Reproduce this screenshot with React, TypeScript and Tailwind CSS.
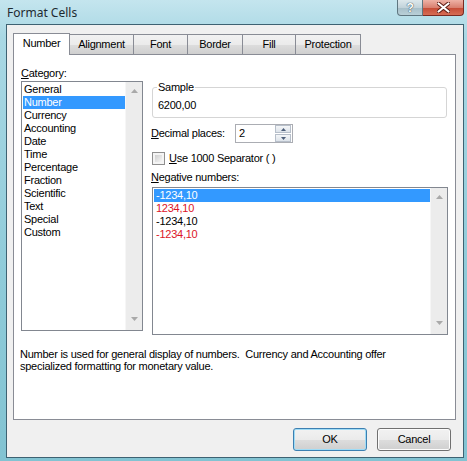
import React from 'react';

const categories = ['General', 'Number', 'Currency', 'Accounting', 'Date', 'Time', 'Percentage', 'Fraction', 'Scientific', 'Text', 'Special', 'Custom'];

const negatives = [
  { label: '-1234,10', red: false },
  { label: '1234,10', red: true },
  { label: '-1234,10', red: false },
  { label: '-1234,10', red: true },
];

const tabs = [
  { label: 'Alignment', w: 'w-[65px]' },
  { label: 'Font', w: 'w-[55px]' },
  { label: 'Border', w: 'w-[56px]' },
  { label: 'Fill', w: 'w-[54px]' },
  { label: 'Protection', w: 'w-[66px]' },
];

function Arrow({ down }: { down?: boolean }) {
  return (
    <svg width="7" height="4" viewBox="0 0 7 4">
      <path d={down ? 'M0 0 L7 0 L3.5 4 Z' : 'M0 4 L3.5 0 L7 4 Z'} fill="#a9a9a9" />
    </svg>
  );
}

function ScrollTrack() {
  return (
    <div className="w-[17px] shrink-0 bg-[#ececec] border-l border-[#f6f6f6] flex flex-col justify-between items-center pt-[7px] pb-[9px]">
      <Arrow />
      <Arrow down />
    </div>
  );
}

function TitleBar() {
  return (
    <div className="h-[24px] shrink-0 flex items-start relative">
      <span className="pl-[7px] pt-[5px] text-[12px] leading-[15px] tracking-normal text-[#1e2a30] font-['Noto_Sans',sans-serif]">Format Cells</span>
      <div className="ml-auto mr-[3px] flex">
        <div className="w-[26px] h-[16px] rounded-bl-[4px] border border-t-0 border-[#5f7680] bg-[linear-gradient(180deg,#dde8ec_0%,#c2d3da_50%,#a6bec8_51%,#b9d0d8_100%)] flex items-center justify-center">
          <span className="text-[12px] leading-[12px] font-bold text-white [text-shadow:0_0_1px_#2d4450,0_0_1px_#2d4450]">?</span>
        </div>
        <div className="w-[41px] h-[16px] rounded-br-[4px] border border-l-0 border-t-0 border-[#7a2a22] bg-[linear-gradient(180deg,#eeb2a6_0%,#d98171_50%,#c54a35_51%,#d66d55_100%)] flex items-center justify-center">
          <svg width="13" height="11" viewBox="0 0 13 11">
            <path d="M1.5 1.5 L11.5 9.5 M11.5 1.5 L1.5 9.5" stroke="#5a1a12" strokeWidth="4" strokeLinecap="round" />
            <path d="M1.5 1.5 L11.5 9.5 M11.5 1.5 L1.5 9.5" stroke="#ffffff" strokeWidth="2.2" strokeLinecap="round" />
          </svg>
        </div>
      </div>
    </div>
  );
}

export default function App() {
  return (
    <div className="w-[467px] h-[461px] flex flex-col overflow-hidden bg-[linear-gradient(180deg,#c4e5ee_0%,#a9d8e4_8%,#8fcbd9_60%,#82c3d2_100%)] font-['Liberation_Sans',Arial,sans-serif] text-[11px] tracking-[-0.25px] text-black">
      <TitleBar />

      <div className="flex-1 ml-[6px] mr-[3px] mb-[3px] border border-[#3e6272] bg-[#f0f0f0] flex flex-col pt-[8px] px-[6px]">
        {/* tab strip */}
        <div className="flex items-end h-[22px] shrink-0">
          <div className="relative z-10 w-[57px] h-[22px] bg-white border border-b-0 border-[#898c95] flex items-center justify-center pb-[2px]">
            Number
          </div>
          {tabs.map(t => (
            <div key={t.label} className={`${t.w} -ml-px h-[20px] mb-[1px] bg-[linear-gradient(180deg,#f2f2f2_0%,#ebebeb_50%,#dddddd_51%,#cfcfcf_100%)] border border-b-0 border-[#898c95] flex items-center justify-center`}>
              {t.label}
            </div>
          ))}
        </div>

        {/* panel */}
        <div className="-mt-px h-[366px] w-[443px] bg-white border border-[#898c95] flex flex-col shrink-0">
          <div className="flex items-start pl-[7px] pt-[10px]">
            {/* category */}
            <div className="w-[122px] flex flex-col">
              <div className="h-[16px] leading-[16px]"><span className="underline">C</span>ategory:</div>
              <div className="h-[250px] border border-[#828790] flex">
                <div className="flex-1 pt-[1px] pl-[1px]">
                  {categories.map(c => (
                    <div key={c} className={`h-[13px] leading-[13px] pl-[1px] ${c === 'Number' ? 'bg-[#3399ff] text-white' : ''}`}>{c}</div>
                  ))}
                </div>
                <ScrollTrack />
              </div>
            </div>

            {/* right column */}
            <div className="ml-[8px] w-[296px] flex flex-col">
              <div className="mt-[22px] ml-[1px] w-[295px] h-[31px] relative border border-[#d5d5d5] rounded-[3px] pl-[5px] pt-[11px] leading-[13px]">
                <span className="absolute -top-[8px] left-[4px] bg-white px-[1px] leading-[15px]">Sample</span>
                6200,00
              </div>

              <div className="mt-[6px] flex items-center h-[19px]">
                <span className="w-[84px]"><span className="underline">D</span>ecimal places:</span>
                <div className="w-[58px] h-[19px] border border-[#abadb3] flex items-center">
                  <span className="flex-1 pl-[3px] leading-[13px]">2</span>
                  <div className="w-[16px] h-[17px] flex flex-col mr-[1px]">
                    <div className="h-[8px] border border-[#b7bfca] bg-[linear-gradient(180deg,#f4f6f8,#dde3ea)] flex items-center justify-center">
                      <svg width="5" height="3" viewBox="0 0 5 3"><path d="M0 3 L2.5 0 L5 3 Z" fill="#4e5f7a" /></svg>
                    </div>
                    <div className="h-[8px] mt-[1px] border border-[#b7bfca] bg-[linear-gradient(180deg,#f4f6f8,#dde3ea)] flex items-center justify-center">
                      <svg width="5" height="3" viewBox="0 0 5 3"><path d="M0 0 L5 0 L2.5 3 Z" fill="#4e5f7a" /></svg>
                    </div>
                  </div>
                </div>
              </div>

              <div className="mt-[9px] ml-[1px] flex items-center h-[13px]">
                <div className="w-[13px] h-[13px] border border-[#8f8f8f] bg-[#f4f4f4] p-[2px]">
                  <div className="w-full h-full bg-[linear-gradient(135deg,#cfcfcf,#f5f5f5)]" />
                </div>
                <span className="ml-[4px] leading-[13px]"><span className="underline">U</span>se 1000 Separator ( )</span>
              </div>

              <div className="mt-[4px] h-[16px] leading-[16px]"><span className="underline">N</span>egative numbers:</div>

              <div className="mt-[2px] ml-[1px] w-[296px] h-[148px] border border-[#828790] flex">
                <div className="flex-1 pt-[1px] pl-[1px]">
                  {negatives.map((n, i) => (
                    <div key={i} className={`h-[13px] leading-[13px] pl-[2px] ${i === 0 ? 'bg-[#3399ff] text-white' : n.red ? 'text-[#dc1428]' : ''}`}>{n.label}</div>
                  ))}
                </div>
                <ScrollTrack />
              </div>
            </div>
          </div>

          <p className="mt-[13px] pl-[6px] pr-[20px] leading-[12px]">
            Number is used for general display of numbers.&nbsp; Currency and Accounting offer specialized formatting for monetary value.
          </p>
        </div>

        {/* buttons */}
        <div className="mt-[8px] flex justify-end gap-[10px] pr-[6px]">
          <button className="w-[74px] h-[23px] rounded-[3px] border border-[#3c7fb1] shadow-[inset_0_0_0_1px_#9fdcf6] bg-[linear-gradient(180deg,#f2f2f2_0%,#ebebeb_50%,#dddddd_51%,#cfcfcf_100%)] text-[11px]">OK</button>
          <button className="w-[74px] h-[23px] rounded-[3px] border border-[#707070] shadow-[inset_0_0_0_1px_#fcfcfc] bg-[linear-gradient(180deg,#f2f2f2_0%,#ebebeb_50%,#dddddd_51%,#cfcfcf_100%)] text-[11px]">Cancel</button>
        </div>
      </div>
    </div>
  );
}
